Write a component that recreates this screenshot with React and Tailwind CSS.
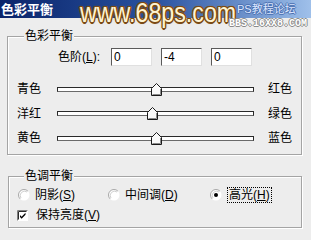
import React from 'react';

const sliders = [
  { left: '青色', right: '红色', value: 0, rowClass: 'h-[24px]' },
  { left: '洋红', right: '绿色', value: -4, rowClass: 'h-[25px]' },
  { left: '黄色', right: '蓝色', value: 0, rowClass: 'h-[24px]' },
];

function Thumb() {
  return (
    <svg width="11" height="13" viewBox="0 0 11 13">
      <path d="M0.5 5.5 L5.5 0.5 L10.5 5.5 L10.5 12.5 L0.5 12.5 Z" fill="#fafafa" stroke="#1a1a1a" strokeWidth="1" />
      <path d="M1.5 11.5 L9.5 11.5 L9.5 6" fill="none" stroke="#8a8a8a" strokeWidth="1" />
    </svg>
  );
}

function Slider({ left, right, value, rowClass }) {
  // track is 197px wide, range -100..100
  const pos = ((value + 100) / 200) * 195 - 5;
  return (
    <div className={`flex items-center pl-[9px] ${rowClass}`}>
      <span className="w-[40px] text-[12px] leading-none">{left}</span>
      <div className="relative h-[5px] w-[197px] border border-[#2a2a2a] border-b-[#6a6a6a] bg-white">
        <div className="absolute top-[-5px]" style={{ left: pos }}>
          <Thumb />
        </div>
      </div>
      <span className="ml-[14px] text-[12px] leading-none">{right}</span>
    </div>
  );
}

function Radio({ checked }) {
  return (
    <svg width="12" height="12" viewBox="0 0 12 12" className="shrink-0">
      <circle cx="6" cy="6" r="5.5" fill="#ffffff" />
      <path d="M9.9 2.1 A5.5 5.5 0 0 0 2.1 9.9" stroke="#a8a8a8" fill="none" strokeWidth="1" />
      <path d="M9 3 A4.3 4.3 0 0 0 3 9" stroke="#d0d0d0" fill="none" strokeWidth="1" />
      {checked && <circle cx="6" cy="6" r="2" fill="#000" />}
    </svg>
  );
}

function Check() {
  return (
    <svg width="11" height="11" viewBox="0 0 11 11" className="shrink-0">
      <rect x="0" y="0" width="11" height="11" fill="#ffffff" />
      <path d="M0.5 10.5 L0.5 0.5 L10.5 0.5" stroke="#808080" fill="none" />
      <path d="M1.5 9.5 L1.5 1.5 L9.5 1.5" stroke="#2a2a2a" fill="none" />
      <path d="M3 5 L4.6 6.8 L8.5 2.8 L8.5 4.8 L4.6 8.8 L3 7 Z" fill="#000" />
    </svg>
  );
}

function NumberBox({ value }) {
  return (
    <div className="flex h-[18px] w-[41px] items-center border border-[#5a5a5a] border-b-[#e0e0e0] border-r-[#e0e0e0] bg-white pl-[2px] text-[12px] leading-none">
      {value}
    </div>
  );
}

export default function App() {
  return (
    <div className="relative h-[240px] w-[311px] overflow-hidden bg-[#ededed] font-['Liberation_Sans','Noto_Sans_CJK_SC',sans-serif] text-black">
      {/* title bar */}
      <div className="flex h-[18px] items-center bg-gradient-to-r from-[#0a246a] via-[#2a52a0] to-[#9fc0ea] pl-[1px]">
        <span className="text-[13px] font-bold leading-none text-white">色彩平衡</span>
      </div>

      {/* watermark */}
      <div className="pointer-events-none absolute left-[80px] top-[0px] origin-left scale-x-[0.86] text-[27px] leading-none text-[#fff4d2] [text-shadow:1.5px_0_0_#7b4a14,-1.5px_0_0_#7b4a14,0_1.5px_0_#7b4a14,0_-1.5px_0_#7b4a14,1px_1px_0_#7b4a14,-1px_-1px_0_#7b4a14,1px_-1px_0_#7b4a14,-1px_1px_0_#7b4a14,0_0_3px_#a0701e]">
        www.68ps.com
      </div>
      <div className="pointer-events-none absolute left-[237px] top-[4px] text-[11px] leading-none text-[#dbe6ff] [text-shadow:1px_0_0_#4a6fb0,-1px_0_0_#4a6fb0,0_1px_0_#4a6fb0,0_-1px_0_#4a6fb0]">
        PS教程论坛
      </div>
      <div className="pointer-events-none absolute left-[229px] top-[19px] font-['Liberation_Mono',monospace] text-[10px] font-bold leading-none text-white [text-shadow:1px_0_0_#8a8a8a,-1px_0_0_#8a8a8a,0_1px_0_#8a8a8a,0_-1px_0_#8a8a8a]">
        BBS.16XX8.COM
      </div>

      {/* colour balance group */}
      <div className="relative ml-[7px] mt-[18px] h-[119px] w-[295px] border border-[#a4a4a4] [box-shadow:1px_1px_0_#ffffff,inset_1px_1px_0_#ffffff]">
        <span className="absolute left-[16px] top-[-8px] bg-[#ededed] px-[1px] text-[12px] leading-[14px]">色彩平衡</span>
        <div className="mt-[11px] flex h-[18px] items-center pl-[50px]">
          <span className="w-[53px] text-[12px] leading-none">
            色阶(<span className="underline">L</span>):
          </span>
          <div className="flex gap-[9px]">
            <NumberBox value="0" />
            <NumberBox value="-4" />
            <NumberBox value="0" />
          </div>
        </div>
        <div className="mt-[11px] flex flex-col">
          {sliders.map((s) => (
            <Slider key={s.left} {...s} />
          ))}
        </div>
      </div>

      {/* tone balance group */}
      <div className="relative ml-[8px] mt-[21px] h-[52px] w-[294px] border border-[#a4a4a4] [box-shadow:1px_1px_0_#ffffff,inset_1px_1px_0_#ffffff]">
        <span className="absolute left-[15px] top-[-8px] bg-[#ededed] px-[1px] text-[12px] leading-[14px]">色调平衡</span>
        <div className="mt-[10px] flex h-[16px] items-center pl-[9px] text-[12px] leading-none">
          <div className="flex w-[90px] items-center gap-[5px]">
            <Radio />
            <span>
              阴影(<span className="underline">S</span>)
            </span>
          </div>
          <div className="flex w-[102px] items-center gap-[5px]">
            <Radio />
            <span>
              中间调(<span className="underline">D</span>)
            </span>
          </div>
          <div className="flex items-center gap-[5px]">
            <Radio checked />
            <span className="border border-dotted border-black px-[1px] py-[1px]">
              高光(<span className="underline">H</span>)
            </span>
          </div>
        </div>
        <div className="mt-[5px] flex h-[14px] items-center gap-[8px] pl-[8px] text-[12px] leading-none">
          <Check />
          <span>
            保持亮度(<span className="underline">V</span>)
          </span>
        </div>
      </div>
    </div>
  );
}
